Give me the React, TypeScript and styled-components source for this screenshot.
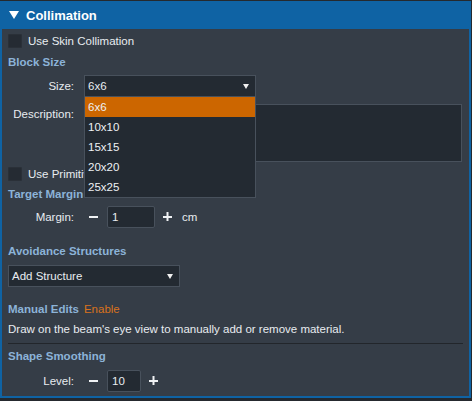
import React from "react";
import styled, { createGlobalStyle } from "styled-components";

const Global = createGlobalStyle`
  html, body { margin: 0; padding: 0; background: #25292e; }
  body { font-family: "Liberation Sans", Arial, sans-serif; font-size: 11.5px; color: #e8ecf0; }
`;

const Panel = styled.div`
  margin-top: 1px;
  width: 471px;
  height: 397px;
  box-sizing: border-box;
  border: 2px solid #0f63a4;
  border-top: none;
  background: #353d47;
  display: flex;
  flex-direction: column;
`;

const Header = styled.div`
  height: 28px;
  margin: 0 -2px;
  background: #0f63a4;
  display: flex;
  align-items: center;
  padding-left: 9px;
  gap: 6px;
  color: #ffffff;
  font-weight: bold;
  font-size: 13px;
`;

const Body = styled.div`
  padding: 4px 6px 0 6px;
  display: flex;
  flex-direction: column;
`;

const CheckRow = styled.label<{ $mt?: number }>`
  display: flex;
  align-items: center;
  gap: 6px;
  height: 16px;
  margin-top: ${(p) => p.$mt ?? 0}px;
`;

const Box = styled.span`
  width: 12px;
  height: 12px;
  border: 1px solid #2a3038;
  background: #252b33;
  border-radius: 1px;
`;

const Heading = styled.div<{ $mt?: number }>`
  font-weight: bold;
  color: #8cb3d8;
  height: 16px;
  line-height: 16px;
  margin-top: ${(p) => p.$mt ?? 0}px;
  display: flex;
  gap: 5px;
`;

const Enable = styled.span`
  color: #d9721d;
  font-weight: normal;
`;

const FieldRow = styled.div<{ $mt?: number; $align?: string }>`
  display: flex;
  align-items: ${(p) => p.$align ?? "center"};
  margin-top: ${(p) => p.$mt ?? 0}px;
`;

const Label = styled.div<{ $pt?: number }>`
  width: 66px;
  text-align: right;
  margin-right: 10px;
  padding-top: ${(p) => p.$pt ?? 0}px;
`;

const SelectWrap = styled.div<{ $w: number }>`
  position: relative;
  width: ${(p) => p.$w}px;
  height: 22px;
  box-sizing: border-box;
  border: 1px solid #48515c;
  background: #232a32;
  display: flex;
  align-items: center;
  padding: 0 4px 0 3px;
  justify-content: space-between;
`;

const Arrow = styled.span`
  width: 0;
  height: 0;
  border-left: 3.5px solid transparent;
  border-right: 3.5px solid transparent;
  border-top: 5px solid #f0f0f0;
  margin-right: 2px;
`;

const List = styled.div`
  position: absolute;
  left: -1px;
  top: 20px;
  width: 172px;
  box-sizing: border-box;
  border: 1px solid #48515c;
  background: #232a32;
  z-index: 5;
`;

const Item = styled.div<{ $sel?: boolean }>`
  height: 20px;
  line-height: 20px;
  padding-left: 3px;
  background: ${(p) => (p.$sel ? "#cc6600" : "transparent")};
  color: #eef1f4;
`;

const TextArea = styled.div`
  width: 378px;
  height: 58px;
  box-sizing: border-box;
  border: 1px solid #48515c;
  background: #232a32;
`;

const StepBtn = styled.span`
  width: 20px;
  height: 20px;
  display: flex;
  align-items: center;
  justify-content: center;
`;

const NumInput = styled.div<{ $w: number }>`
  width: ${(p) => p.$w}px;
  height: 22px;
  box-sizing: border-box;
  border: 1px solid #48515c;
  background: #232a32;
  border-radius: 2px;
  display: flex;
  align-items: center;
  padding-left: 4px;
  margin: 0 3px 0 3px;
`;

const Unit = styled.span`
  margin-left: 4px;
`;

const Text = styled.div<{ $mt?: number }>`
  height: 16px;
  line-height: 16px;
  margin-top: ${(p) => p.$mt ?? 0}px;
`;

const Rule = styled.div<{ $mt?: number }>`
  height: 1px;
  background: #22262b;
  margin-top: ${(p) => p.$mt ?? 0}px;
  width: 455px;
`;

const Minus = () => (
  <svg width="10" height="10" viewBox="0 0 10 10">
    <rect x="0" y="4" width="9" height="2" fill="#f0f2f4" />
  </svg>
);
const Plus = () => (
  <svg width="10" height="10" viewBox="0 0 10 10">
    <rect x="0" y="4" width="9" height="2" fill="#f0f2f4" />
    <rect x="3.5" y="0" width="2" height="9" fill="#f0f2f4" />
  </svg>
);
const Caret = () => (
  <svg width="11" height="10" viewBox="0 0 11 10">
    <path d="M0 1 L10 1 L5 9 Z" fill="#ffffff" />
  </svg>
);

const sizes = ["6x6", "10x10", "15x15", "20x20", "25x25"];

export default function App() {
  return (
    <>
      <Global />
      <Panel>
        <Header>
          <Caret />
          <span>Collimation</span>
        </Header>
        <Body>
          <CheckRow>
            <Box />
            <span>Use Skin Collimation</span>
          </CheckRow>
          <Heading $mt={5}>Block Size</Heading>
          <FieldRow $mt={5}>
            <Label>Size:</Label>
            <SelectWrap $w={172}>
              <span>6x6</span>
              <Arrow />
              <List>
                {sizes.map((s, i) => (
                  <Item key={s} $sel={i === 0}>
                    {s}
                  </Item>
                ))}
              </List>
            </SelectWrap>
          </FieldRow>
          <FieldRow $mt={7} $align="flex-start">
            <Label $pt={4}>Description:</Label>
            <TextArea />
          </FieldRow>
          <CheckRow $mt={4}>
            <Box />
            <span>Use Primitive Shape</span>
          </CheckRow>
          <Heading $mt={4}>Target Margin</Heading>
          <FieldRow $mt={4}>
            <Label>Margin:</Label>
            <StepBtn>
              <Minus />
            </StepBtn>
            <NumInput $w={48}>1</NumInput>
            <StepBtn>
              <Plus />
            </StepBtn>
            <Unit>cm</Unit>
          </FieldRow>
          <Heading $mt={15}>Avoidance Structures</Heading>
          <FieldRow $mt={6}>
            <SelectWrap $w={172}>
              <span>Add Structure</span>
              <Arrow />
            </SelectWrap>
          </FieldRow>
          <Heading $mt={14}>
            Manual Edits <Enable>Enable</Enable>
          </Heading>
          <Text $mt={4}>Draw on the beam's eye view to manually add or remove material.</Text>
          <Rule $mt={6} />
          <Heading $mt={4}>Shape Smoothing</Heading>
          <FieldRow $mt={6}>
            <Label>Level:</Label>
            <StepBtn>
              <Minus />
            </StepBtn>
            <NumInput $w={34}>10</NumInput>
            <StepBtn>
              <Plus />
            </StepBtn>
          </FieldRow>
        </Body>
      </Panel>
    </>
  );
}
